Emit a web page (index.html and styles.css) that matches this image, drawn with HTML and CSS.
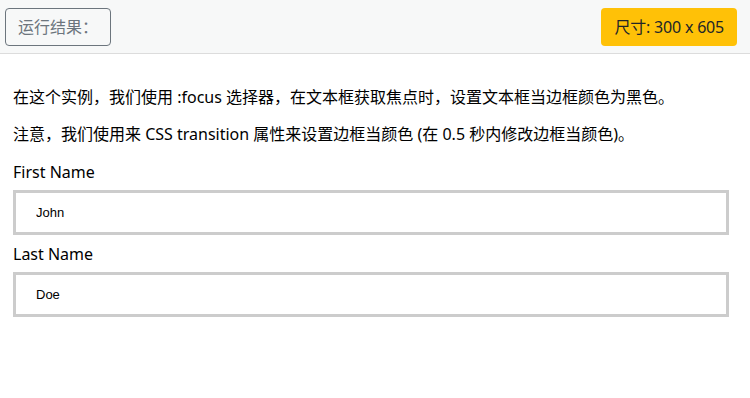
FILE: index.html
```html
<html>
	<head>
		<title>运行结果</title>
		<meta name="viewport" content="width=device-width, initial-scale=1">
		<link rel="stylesheet" href="styles.css">
	</head>
	<body>
		<div class="topbar">
			<button class="btn btnOutline">运行结果：</button>
			<span class="btn btnYellow">尺寸: 300 x 605</span>
		</div>
		<div class="content">
			<p>在这个实例，我们使用 :focus 选择器，在文本框获取焦点时，设置文本框当边框颜色为黑色。</p>
			<p>注意，我们使用来 CSS transition 属性来设置边框当颜色 (在 0.5 秒内修改边框当颜色)。</p>
			<form>
				<label for="fname">First Name</label>
				<input type="text" id="fname" name="fname" value="John">
				<label for="lname">Last Name</label>
				<input type="text" id="lname" name="lname" value="Doe">
			</form>
		</div>
	</body>
</html>
```

FILE: styles.css
```css
html{font-family: "Noto Sans", "Noto Sans CJK SC", sans-serif; color: #000;}
body{margin: 0px;}
.topbar{display: flex; justify-content: space-between; align-items: flex-start; background-color: #f7f8f8;
	border-bottom: 1px solid #dcdcdc; height: 45px; padding: 8px 13px 0px 5px;}
.btn{display: inline-block; box-sizing: border-box; height: 38px; padding: 0px 12px; font-size: 16px; line-height: 36px;
	border: 1px solid transparent; border-radius: 4px; font-family: "Noto Sans", "Noto Sans CJK SC", sans-serif;}
.btnOutline{background-color: transparent; border-color: #6c757d; color: #6c757d;}
.btnYellow{background-color: #ffc107; color: #212529; letter-spacing: -0.2px;}
.content{padding: 31px 21px 0px 13px;}
p{font-size: 16px; line-height: 25px; margin: 0px 0px 12px 0px;}
form{margin: 0px; padding-top: 1px;}
label{display: block; font-size: 16px; line-height: 24px; margin-bottom: 6px;}
input[type=text]{display: block; box-sizing: border-box; width: 100%; height: 45px; padding: 0px 20px; margin: 0px 0px 7px 0px;
	border: 3px solid #ccc; outline: none; font-family: "Liberation Sans", Arial, sans-serif; font-size: 13px; color: #000;
	-webkit-transition: 0.5s; transition: 0.5s;}
input[type=text]:focus{border: 3px solid #555;}
```
